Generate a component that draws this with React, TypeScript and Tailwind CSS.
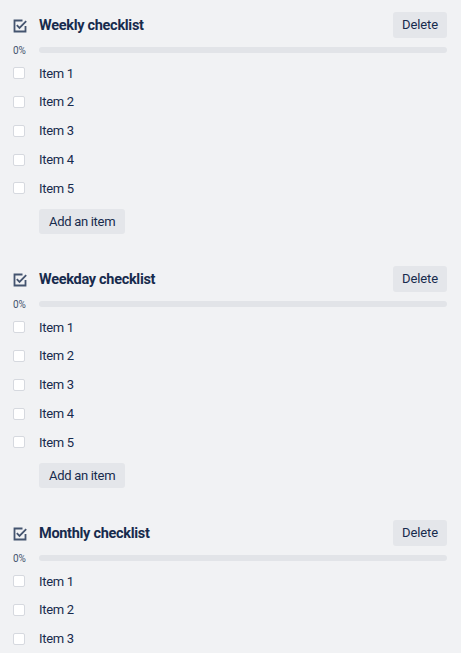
const checklists = [
  { title: 'Weekly checklist', items: ['Item 1', 'Item 2', 'Item 3', 'Item 4', 'Item 5'] },
  { title: 'Weekday checklist', items: ['Item 1', 'Item 2', 'Item 3', 'Item 4', 'Item 5'] },
  { title: 'Monthly checklist', items: ['Item 1', 'Item 2', 'Item 3', 'Item 4', 'Item 5'] },
]

function ChecklistIcon() {
  return (
    <svg width="14" height="14" viewBox="0 0 14 14" fill="none" className="shrink-0">
      <path d="M12.5 7V12.5H1.5V1.5H9.5" stroke="#44546f" strokeWidth="1.8" />
      <path d="M3.8 6.2L6.5 8.9L13.2 2.2" stroke="#44546f" strokeWidth="1.8" />
    </svg>
  )
}

function Checklist({ title, items }: { title: string; items: string[] }) {
  return (
    <section className="mb-[32.25px]">
      {/* Header */}
      <div className="flex items-center justify-between h-[26px]">
        <div className="flex items-center gap-[12px] pt-[2px]">
          <ChecklistIcon />
          <h2 className="text-[14.5px] font-bold tracking-[-0.3px] text-[#172b4d]">{title}</h2>
        </div>
        <button className="h-[26px] px-[9px] rounded-[3px] bg-[#e4e6ea] text-[13px] tracking-[-0.1px] text-[#172b4d]">
          Delete
        </button>
      </div>

      {/* Progress */}
      <div className="flex items-center h-[21px] pt-[3px]">
        <span className="w-[26px] text-[10px] text-[#44546f]">0%</span>
        <div className="flex-1 h-[6px] rounded-full bg-[#e2e4e8]" />
      </div>

      {/* Items */}
      <ul>
        {items.map((item) => (
          <li key={item} className="flex items-center h-[28.75px]">
            <div className="w-[26px] shrink-0">
              <span className="block w-[12px] h-[12px] rounded-[2px] bg-white border border-[#d6d9df]" />
            </div>
            <span className="text-[13px] tracking-[-0.3px] text-[#172b4d]">{item}</span>
          </li>
        ))}
      </ul>

      <div className="flex pl-[26px] mt-[6px]">
        <button className="h-[25px] px-[10px] rounded-[3px] bg-[#e4e6ea] text-[13px] tracking-[-0.3px] text-[#172b4d]">
          Add an item
        </button>
      </div>
    </section>
  )
}

export default function App() {
  return (
    <div className="min-h-screen bg-[#f1f2f4] pt-[12px] pl-[13px] pr-[14px] font-['Roboto',sans-serif]">
      {checklists.map((c) => (
        <Checklist key={c.title} title={c.title} items={c.items} />
      ))}
    </div>
  )
}
